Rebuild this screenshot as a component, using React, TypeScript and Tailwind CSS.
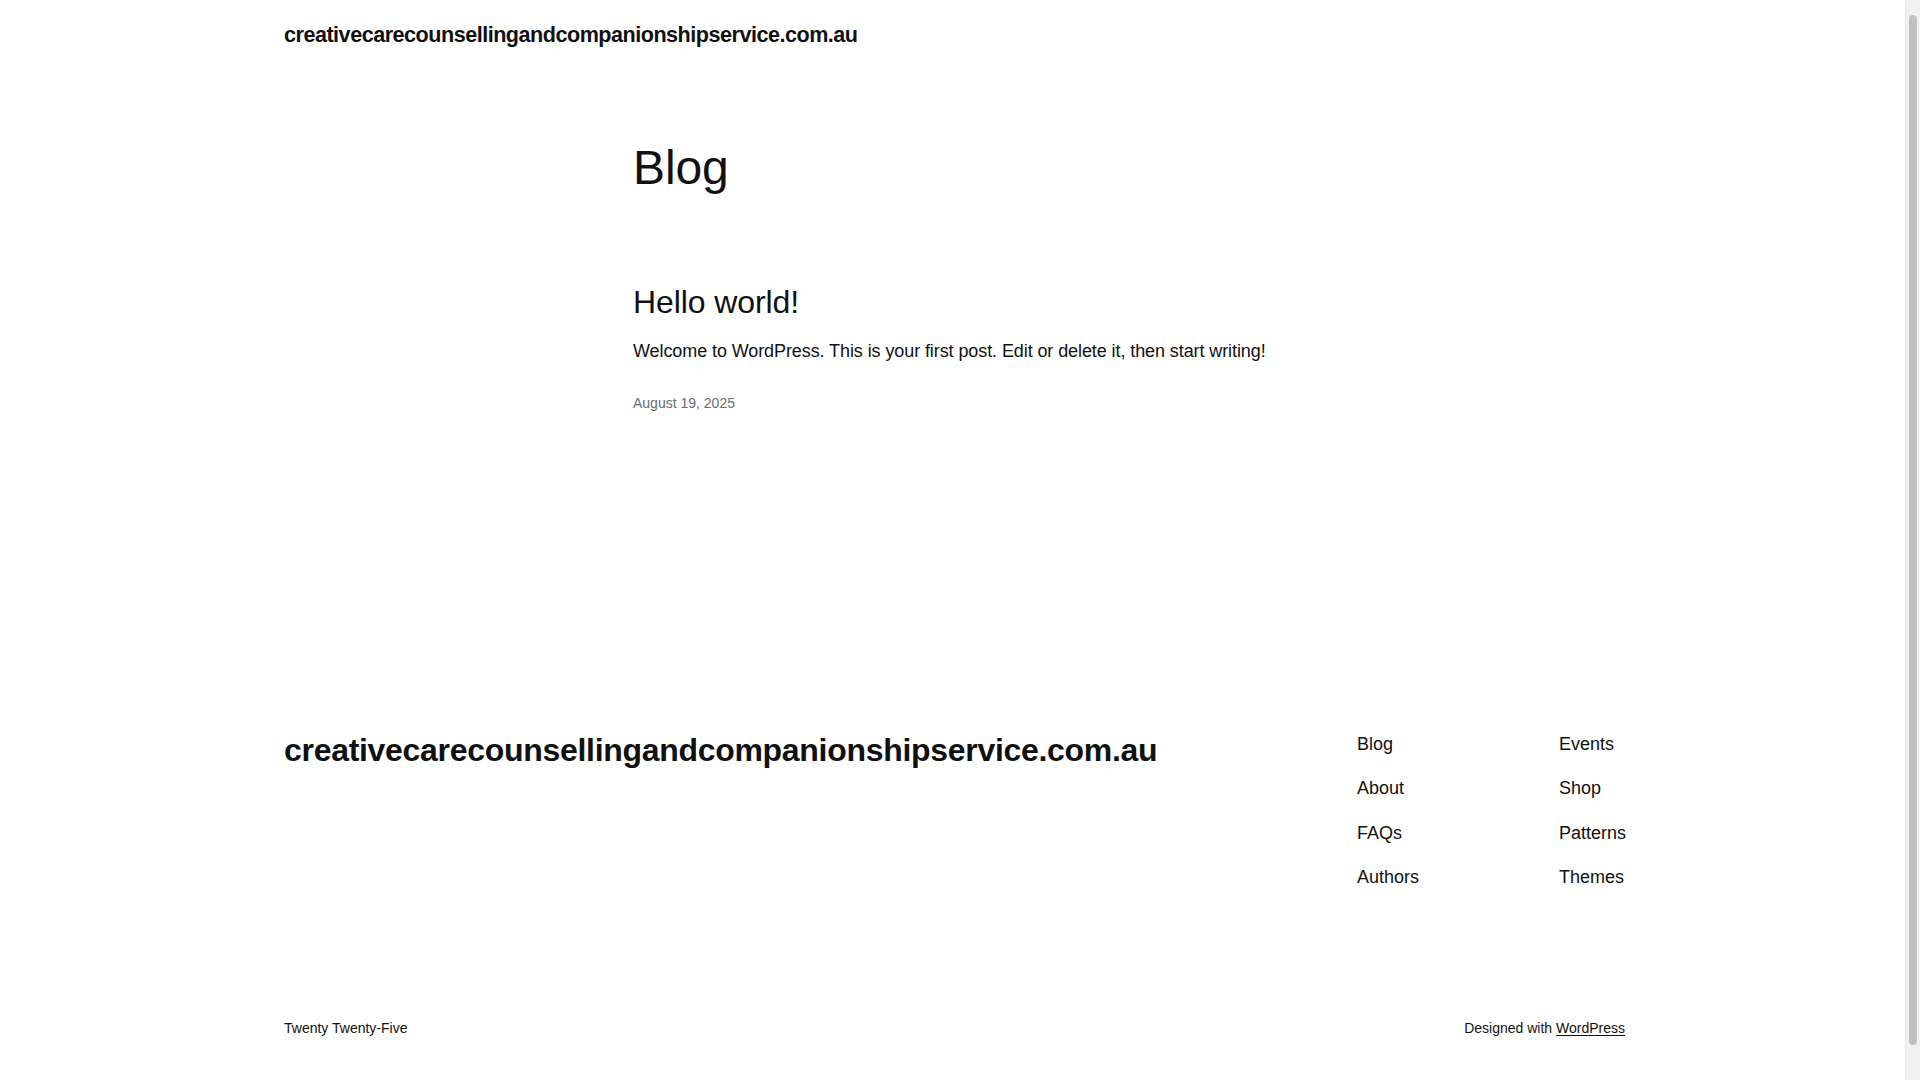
import React from "react";

const font = { fontFamily: '"Liberation Sans", Arial, sans-serif' };

export default function App() {
  const col1 = ["Blog", "About", "FAQs", "Authors"];
  const col2 = ["Events", "Shop", "Patterns", "Themes"];
  return (
    <div className="relative min-h-screen bg-white text-[#111111]" style={font}>
      <div className="ml-[284px] w-[1341px] pb-[40px]">
        <header className="pt-[19.5px]">
          <a className="block text-[21.6px] leading-[30px] font-bold tracking-[-0.5px]">
            creativecarecounsellingandcompanionshipservice.com.au
          </a>
        </header>

        <main className="ml-[349px] w-[645px]">
          <h1 className="mt-[89px] text-[48px] leading-[58px] font-normal tracking-[-0.1px]">Blog</h1>
          <h2 className="mt-[85.6px] text-[32px] leading-[40px] font-normal tracking-[-0.1px]">Hello world!</h2>
          <p className="mt-[15px] text-[18px] leading-[28px] tracking-[-0.09px]">
            Welcome to WordPress. This is your first post. Edit or delete it, then start writing!
          </p>
          <div className="mt-[28.2px] text-[14px] leading-[20px] text-[#6b6b6b]">August 19, 2025</div>
        </main>

        <footer className="mt-[316.5px]">
          <div className="flex items-start justify-between">
            <div className="text-[32px] leading-[40px] font-bold tracking-[-0.3px]">
              creativecarecounsellingandcompanionshipservice.com.au
            </div>
            <div className="flex pl-[2px]">
              <nav className="flex w-[202px] flex-col gap-[16.5px] text-[18px] leading-[28px]">
                {col1.map((t) => (
                  <a key={t} className="block">{t}</a>
                ))}
              </nav>
              <nav className="flex w-[66px] flex-col gap-[16.5px] text-[18px] leading-[28px]">
                {col2.map((t) => (
                  <a key={t} className="block whitespace-nowrap">{t}</a>
                ))}
              </nav>
            </div>
          </div>
          <div className="mt-[126.3px] flex items-center justify-between text-[14px] leading-[20px]">
            <span>Twenty Twenty-Five</span>
            <span>
              Designed with <a className="underline underline-offset-2">WordPress</a>
            </span>
          </div>
        </footer>
      </div>

      <div className="fixed top-0 right-0 h-screen w-[15px] border-l border-[#e8e8e8] bg-[#f1f1f1]">
        <div className="mx-auto mt-[15px] h-[1030px] w-[8px] rounded-[4px] bg-[#c1c1c1]" />
      </div>
    </div>
  );
}
